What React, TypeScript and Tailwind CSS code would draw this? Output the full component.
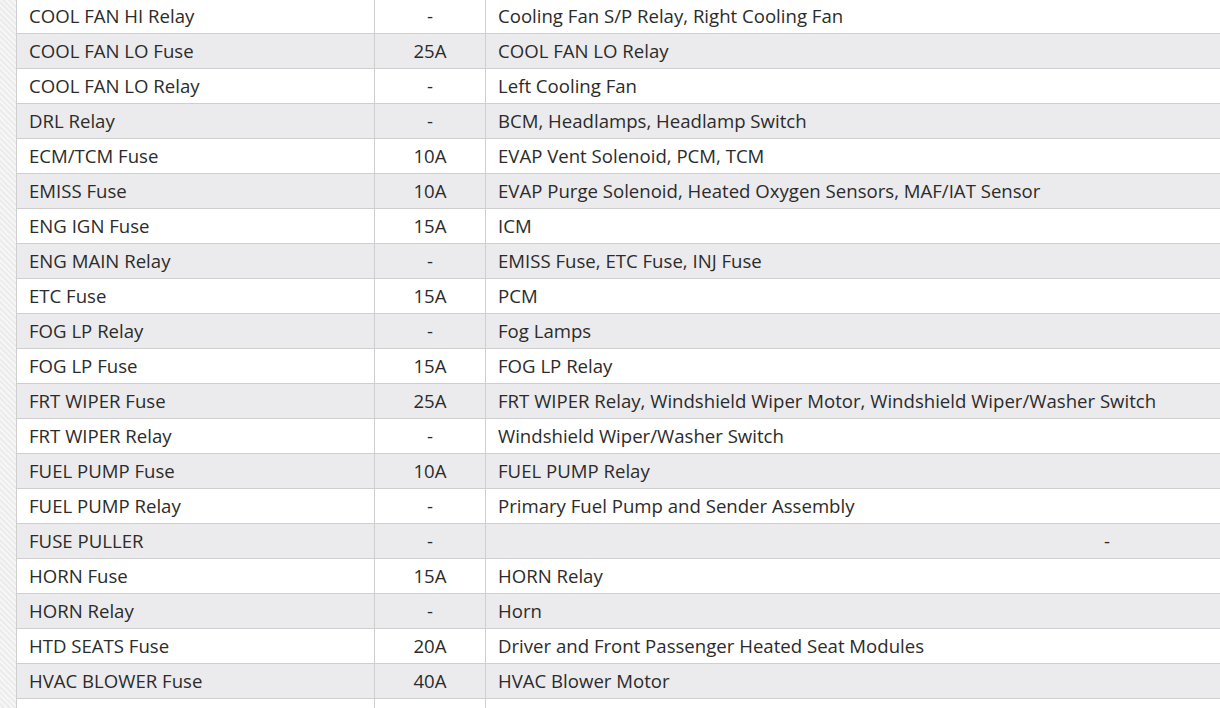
import React from "react";

const rows: [string, string, string][] = [
  ["COOL FAN HI Relay", "-", "Cooling Fan S/P Relay, Right Cooling Fan"],
  ["COOL FAN LO Fuse", "25A", "COOL FAN LO Relay"],
  ["COOL FAN LO Relay", "-", "Left Cooling Fan"],
  ["DRL Relay", "-", "BCM, Headlamps, Headlamp Switch"],
  ["ECM/TCM Fuse", "10A", "EVAP Vent Solenoid, PCM, TCM"],
  ["EMISS Fuse", "10A", "EVAP Purge Solenoid, Heated Oxygen Sensors, MAF/IAT Sensor"],
  ["ENG IGN Fuse", "15A", "ICM"],
  ["ENG MAIN Relay", "-", "EMISS Fuse, ETC Fuse, INJ Fuse"],
  ["ETC Fuse", "15A", "PCM"],
  ["FOG LP Relay", "-", "Fog Lamps"],
  ["FOG LP Fuse", "15A", "FOG LP Relay"],
  ["FRT WIPER Fuse", "25A", "FRT WIPER Relay, Windshield Wiper Motor, Windshield Wiper/Washer Switch"],
  ["FRT WIPER Relay", "-", "Windshield Wiper/Washer Switch"],
  ["FUEL PUMP Fuse", "10A", "FUEL PUMP Relay"],
  ["FUEL PUMP Relay", "-", "Primary Fuel Pump and Sender Assembly"],
  ["FUSE PULLER", "-", "@"],
  ["HORN Fuse", "15A", "HORN Relay"],
  ["HORN Relay", "-", "Horn"],
  ["HTD SEATS Fuse", "20A", "Driver and Front Passenger Heated Seat Modules"],
  ["HVAC BLOWER Fuse", "40A", "HVAC Blower Motor"],
  ["", "", ""],
];

export default function App() {
  return (
    <div
      className="w-[1220px] h-[708px] overflow-hidden flex bg-white text-[#2b2b2b]"
      style={{ fontFamily: '"Open Sans", "Noto Sans", sans-serif' }}
    >
      <div className="w-[16px] shrink-0 bg-[repeating-linear-gradient(45deg,#f6f6f6_0px,#f6f6f6_2px,#ececec_2px,#ececec_4px)]" />
      <div className="flex-1 flex flex-col mt-[-1px] border-l border-[#cfcfcf]">
        {rows.map((r, i) => (
          <div
            key={i}
            className={`flex h-[35px] shrink-0 border-b border-[#cfcfcf] text-[18.6px] leading-[34px] ${
              i % 2 === 1 ? "bg-[#ebebed]" : "bg-white"
            }`}
          >
            <div className="w-[358px] shrink-0 pl-[12px] border-r border-[#cfcfcf] whitespace-nowrap">
              {r[0]}
            </div>
            <div className="w-[111px] shrink-0 text-center border-r border-[#cfcfcf] whitespace-nowrap">
              {r[1]}
            </div>
            <div className="flex-1 pl-[12px] whitespace-nowrap">
              {r[2] === "@" ? <span className="pl-[606px]">-</span> : r[2]}
            </div>
          </div>
        ))}
      </div>
    </div>
  );
}
